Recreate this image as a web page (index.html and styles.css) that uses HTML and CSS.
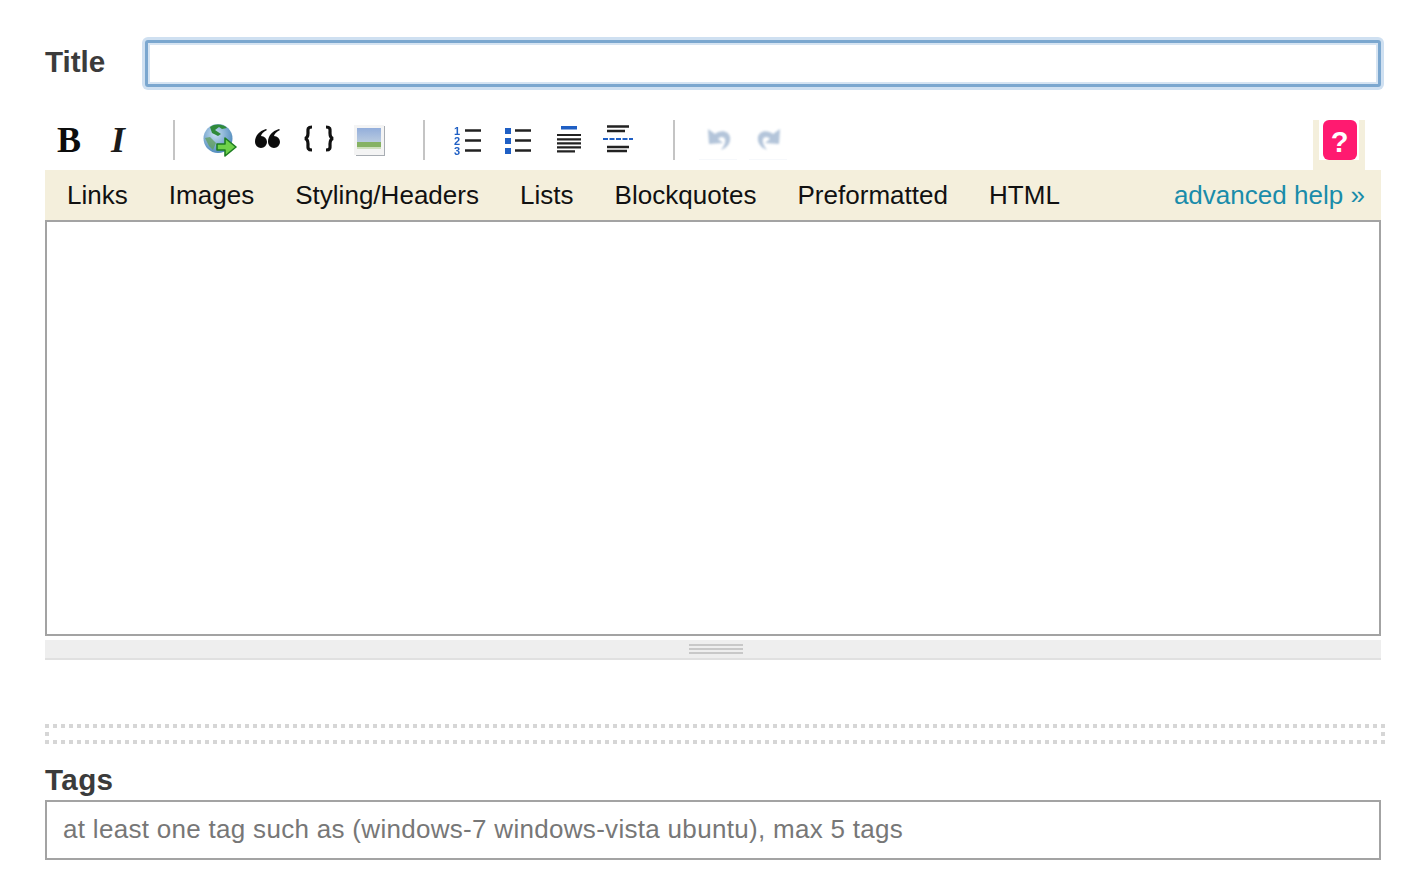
FILE: index.html
```html
<!DOCTYPE html>
<html lang="en">
<head>
    <meta charset="UTF-8">
    <title>Ask a question</title>
    <link rel="stylesheet" href="styles.css">
</head>
<body>
    <main class="page">
        <div class="title-row">
            <label class="field-label title-label" for="title">Title</label>
            <input class="title-input" id="title" type="text">
        </div>

        <div class="toolbar">
            <span class="btn btn-text"><b class="glyph-bold">B</b></span>
            <span class="btn btn-text"><b class="glyph-italic">I</b></span>
            <span class="spacer"></span>

            <!-- link -->
            <span class="btn">
                <svg class="icon" viewBox="0 0 50 40">
                    <defs>
                        <radialGradient id="sea" cx="0.4" cy="0.35" r="0.75">
                            <stop offset="0" stop-color="#c8dff2"/>
                            <stop offset="1" stop-color="#3f7fb5"/>
                        </radialGradient>
                    </defs>
                    <circle cx="23" cy="18.5" r="14.5" fill="url(#sea)"/>
                    <path d="M15 7 C20 3 29 4 32 8 L27 9 L24 7 L20 10 L26 14 L23 16 L17 13 Z" fill="#2f8a3a"/>
                    <path d="M10 18 L15 17 L21 23 L18 30 L14 26 Z" fill="#5f9f58" opacity=".75"/>
                    <path d="M22 24 L30 24 L30 18 L41 27 L30 36 L30 30 L22 30 Z" fill="#6fd14a" stroke="#1e7d22" stroke-width="1.6" stroke-linejoin="round"/>
                </svg>
            </span>
            <!-- quote -->
            <span class="btn">
                <svg class="icon" viewBox="0 0 50 40">
                    <path d="M21 9 C14 11 10 16 10 22 A6 6 0 1 0 16 16 C16.5 14 18 12 22 10 Z" fill="#0c0c0c"/>
                    <path d="M21 9 C14 11 10 16 10 22 A6 6 0 1 0 16 16 C16.5 14 18 12 22 10 Z" transform="translate(13 0)" fill="#0c0c0c"/>
                </svg>
            </span>
            <!-- code -->
            <span class="btn">
                <svg class="icon" viewBox="0 0 50 40">
                    <path d="M17 7 C12 7 13 10 13 13 C13 16 12 18 10 18.5 C12 19 13 21 13 24 C13 27 12 30 17 30" fill="none" stroke="#111" stroke-width="3.2"/>
                    <path d="M31 7 C36 7 35 10 35 13 C35 16 36 18 38 18.5 C36 19 35 21 35 24 C35 27 36 30 31 30" fill="none" stroke="#111" stroke-width="3.2"/>
                </svg>
            </span>
            <!-- image -->
            <span class="btn">
                <svg class="icon" viewBox="0 0 50 40">
                    <defs>
                        <linearGradient id="sky" x1="0" y1="0" x2="0" y2="1">
                            <stop offset="0" stop-color="#93aedb"/>
                            <stop offset="1" stop-color="#b9cbe0"/>
                        </linearGradient>
                    </defs>
                    <rect x="11" y="6" width="29" height="30" fill="#a8adb3"/>
                    <rect x="9" y="5" width="30" height="30" fill="#f4f4f4"/>
                    <rect x="12" y="8" width="24" height="14" fill="url(#sky)"/>
                    <rect x="12" y="22" width="24" height="5" fill="#86b263"/>
                    <rect x="12" y="27" width="24" height="2" fill="#cfe0bd"/>
                </svg>
            </span>
            <span class="spacer"></span>

            <!-- numbered list -->
            <span class="btn">
                <svg class="icon" viewBox="0 0 50 40">
                    <text class="list-num" x="9" y="15">1</text>
                    <text class="list-num" x="9" y="25">2</text>
                    <text class="list-num" x="9" y="35">3</text>
                    <path d="M20 10.5 H36 M20 20.5 H36 M20 30.5 H36" stroke="#222" stroke-width="2.4"/>
                </svg>
            </span>
            <!-- bullet list -->
            <span class="btn">
                <svg class="icon" viewBox="0 0 50 40">
                    <path d="M10 8 h6 v6 h-6 Z M10 18 h6 v6 h-6 Z M10 28 h6 v6 h-6 Z" fill="#1f5fc4"/>
                    <path d="M20 10.5 H36 M20 20.5 H36 M20 30.5 H36" stroke="#222" stroke-width="2.4"/>
                </svg>
            </span>
            <!-- heading -->
            <span class="btn">
                <svg class="icon" viewBox="0 0 50 40">
                    <rect x="16" y="6" width="16" height="3.5" fill="#1f5fc4"/>
                    <path d="M12 15 H36 M12 19.3 H36 M12 23.3 H36 M12 27.3 H36 M12 31.3 H30" stroke="#222" stroke-width="2.2"/>
                </svg>
            </span>
            <!-- horizontal rule -->
            <span class="btn">
                <svg class="icon" viewBox="0 0 50 40">
                    <path d="M12 6.5 H34 M12 11 H30 M12 27 H34 M12 31 H32" stroke="#222" stroke-width="2.4"/>
                    <path d="M8 19 H38" stroke="#1f5fc4" stroke-width="2.2" stroke-dasharray="5 1.5"/>
                </svg>
            </span>
            <span class="spacer"></span>

            <!-- undo -->
            <span class="btn btn-off">
                <svg class="icon icon-soft" viewBox="0 0 50 40">
                    <path d="M13 9 L14 24 L28 23 L23 19 C26 16 29 17 30 19 C31 22 29 26 26 30 C32 28 36 23 35 17 C34 11 26 9 20 14 Z" fill="#b4c5da"/>
                </svg>
            </span>
            <!-- redo -->
            <span class="btn btn-off">
                <svg class="icon icon-soft" viewBox="0 0 50 40">
                    <path d="M35 9 L34 24 L20 23 L25 19 C22 16 19 17 18 19 C17 22 19 26 22 30 C16 28 12 23 13 17 C14 11 22 9 28 14 Z" fill="#b4c5da"/>
                </svg>
            </span>

            <span class="help-tab"><span class="help-btn"><span class="help-mark">?</span></span></span>
        </div>

        <nav class="help-menu">
            <a>Links</a>
            <a>Images</a>
            <a>Styling/Headers</a>
            <a>Lists</a>
            <a>Blockquotes</a>
            <a>Preformatted</a>
            <a>HTML</a>
            <a class="advanced">advanced help »</a>
        </nav>

        <textarea class="editor"></textarea>
        <div class="grip"><span class="grip-lines"></span></div>

        <div class="preview"></div>

        <label class="field-label tags-label" for="tags">Tags</label>
        <input class="tags-input" id="tags" type="text" placeholder="at least one tag such as (windows-7 windows-vista ubuntu), max 5 tags">
    </main>
</body>
</html>
```

FILE: styles.css
```css
html, body {
    margin: 0;
    padding: 0;
    background: #ffffff;
}

body {
    font-family: "Liberation Sans", Arial, sans-serif;
    overflow: hidden;
}

.page {
    width: 1336px;
    margin-left: 45px;
    padding-top: 40px;
}

.title-row {
    display: flex;
    align-items: center;
}

.field-label {
    display: block;
    font-size: 29.6px;
    font-weight: bold;
    color: #3b3b3b;
}

.title-label {
    width: 100px;
    flex: none;
    margin-top: -4px;
}

.title-input {
    box-sizing: border-box;
    width: 1237px;
    height: 47px;
    border: 3px solid #7ba7cf;
    border-radius: 3px;
    outline: none;
    box-shadow: 0 0 0 3px #cfe0f1, inset 0 0 0 2px #d6e4f2;
}

.toolbar {
    display: flex;
    height: 50px;
    margin-top: 33px;
}

.btn {
    display: block;
    width: 50px;
    height: 40px;
    flex: none;
}

.btn-text {
    text-align: center;
    font-family: "Liberation Serif", "Times New Roman", serif;
    color: #0c0c0c;
    line-height: 40px;
}

.glyph-bold {
    font-size: 36px;
    margin-left: -2px;
}

.glyph-italic {
    font-size: 36px;
    font-style: italic;
    margin-left: -4px;
    color: #1a1a1a;
}

.spacer {
    display: block;
    width: 50px;
    height: 40px;
    flex: none;
}

.spacer::before {
    content: "";
    display: block;
    width: 2px;
    height: 40px;
    margin-left: 28px;
    background: #c4c4c4;
}

.icon {
    display: block;
    width: 50px;
    height: 40px;
    filter: blur(0.5px);
}

.icon-soft {
    filter: blur(0.9px);
}

.list-num {
    font-family: "Liberation Sans", Arial, sans-serif;
    font-size: 11px;
    font-weight: bold;
    fill: #1f5fc4;
}

.btn-off {
    background: linear-gradient(#f6f8fb, #f6f8fb) 4px 39px / 38px 1px no-repeat;
}

.help-tab {
    display: block;
    box-sizing: border-box;
    width: 52px;
    height: 50px;
    margin-left: auto;
    margin-right: 16px;
    padding: 0 6px 10px;
    background: #f4efdc;
}

.help-btn {
    display: flex;
    justify-content: center;
    height: 40px;
    background: #ffffff;
}

.help-mark {
    display: block;
    width: 34px;
    height: 40px;
    margin-left: 1px;
    border-radius: 6px;
    background: #ff1a70;
    color: #ffffff;
    font-size: 29px;
    font-weight: bold;
    line-height: 44px;
    text-align: center;
}

.help-menu {
    display: flex;
    gap: 41px;
    box-sizing: border-box;
    height: 50px;
    padding: 0 16px 0 22px;
    background: #f4efdc;
    color: #111111;
    font-size: 26px;
    letter-spacing: 0.02px;
    line-height: 50px;
}

.advanced {
    margin-left: auto;
    color: #1a8caa;
}

.editor {
    display: block;
    box-sizing: border-box;
    width: 1336px;
    height: 416px;
    margin: 0;
    border: 2px solid #a3a3a3;
    outline: none;
    resize: none;
}

.grip {
    display: flex;
    justify-content: center;
    box-sizing: border-box;
    height: 20px;
    margin-top: 4px;
    padding-top: 4px;
    padding-left: 6px;
    background: #eeeeee;
    border-bottom: 2px solid #e0e0e0;
}

.grip-lines {
    display: block;
    width: 54px;
    height: 10px;
    background: repeating-linear-gradient(#c8c8c8 0, #c8c8c8 2px, #eeeeee 2px, #eeeeee 4px);
}

.preview {
    width: 1340px;
    height: 20px;
    margin-top: 64px;
    background:
        linear-gradient(to right, #d6d6d6 4px, transparent 4px) 0 0 / 8px 4px repeat-x,
        linear-gradient(to right, #d6d6d6 4px, transparent 4px) 0 16px / 8px 4px repeat-x,
        linear-gradient(#d6d6d6, #d6d6d6) 0 8px / 4px 4px no-repeat,
        linear-gradient(#d6d6d6, #d6d6d6) 1336px 8px / 4px 4px no-repeat;
}

.tags-label {
    height: 56px;
    letter-spacing: 0.4px;
    line-height: 72px;
}

.tags-input {
    display: block;
    box-sizing: border-box;
    width: 1336px;
    height: 60px;
    padding: 0 16px 2px;
    border: 2px solid #a3a3a3;
    outline: none;
    font-family: "Liberation Sans", Arial, sans-serif;
    font-size: 26px;
    letter-spacing: 0.3px;
}

.tags-input::placeholder {
    color: #777777;
    opacity: 1;
}
```
